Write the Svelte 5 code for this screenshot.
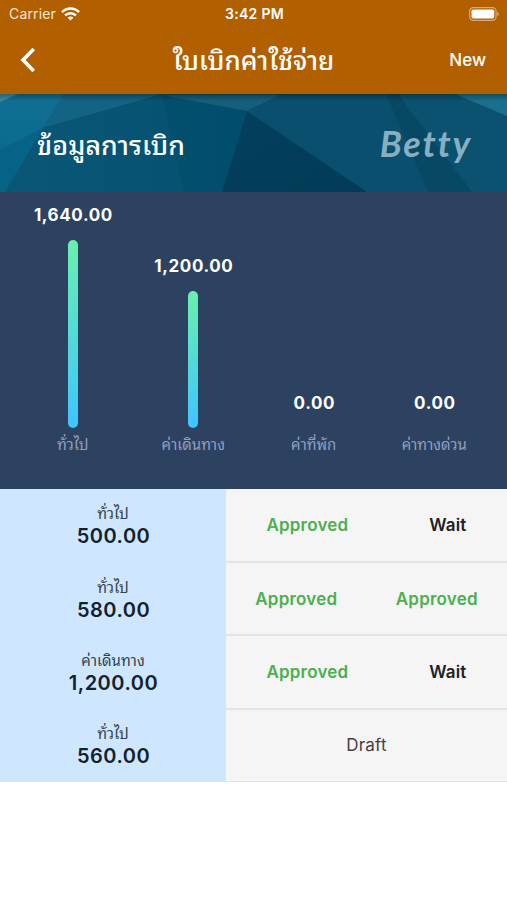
<script lang="ts">
	type Category = { label: string; total: number };
	type Expense = { kind: string; amount: number; status: string[] };

	const categories: Category[] = [
		{ label: "ทั่วไป", total: 1640 },
		{ label: "ค่าเดินทาง", total: 1200 },
		{ label: "ค่าที่พัก", total: 0 },
		{ label: "ค่าทางด่วน", total: 0 },
	];

	const expenses: Expense[] = [
		{ kind: "ทั่วไป", amount: 500, status: ["Approved", "Wait"] },
		{ kind: "ทั่วไป", amount: 580, status: ["Approved", "Approved"] },
		{ kind: "ค่าเดินทาง", amount: 1200, status: ["Approved", "Wait"] },
		{ kind: "ทั่วไป", amount: 560, status: ["Draft"] },
	];

	const BAR_MAX = 188;
	const peak = Math.max(...categories.map((c) => c.total));
	const barHeight = (n: number) => Math.floor((n / peak) * BAR_MAX);
	const fmt = (n: number) => n.toLocaleString("en-US", { minimumFractionDigits: 2 });
</script>

<div class="screen">
	<div class="top">
		<div class="statusbar">
			<span class="carrier">
				Carrier
				<svg width="19" height="14" viewBox="0 0 19 14" fill="none" stroke="#fff" stroke-width="2.5">
					<path d="M1 5.2C5.8.4 13.2.4 18 5.2" />
					<path d="M4.1 8.4c3.1-3 7.7-3 10.8 0" />
					<path d="M9.5 13.6 6.6 10.7c1.7-1.5 4.1-1.5 5.8 0z" fill="#fff" stroke="none" />
				</svg>
			</span>
			<span class="time">3:42 PM</span>
			<svg class="battery" width="31" height="14" viewBox="0 0 31 14">
				<rect x=".7" y=".7" width="26.4" height="12.6" rx="3.6" fill="none" stroke="#d9a878" stroke-width="1.2" />
				<rect x="2.5" y="2.5" width="22.8" height="9" rx="1.8" fill="#fff" />
				<path d="M28.3 4.8c2 .7 2 3.7 0 4.4z" fill="#d9a878" />
			</svg>
		</div>
		<header>
			<button class="back" aria-label="Back">
				<svg width="16" height="26" viewBox="0 0 16 26" fill="none" stroke="#fff" stroke-width="3.6">
					<path d="M13.7 2 3 13l10.7 11" />
				</svg>
			</button>
			<h1>ใบเบิกค่าใช้จ่าย</h1>
			<button class="new">New</button>
		</header>
	</div>

	<section class="banner">
		<svg class="facets" viewBox="0 0 507 98" preserveAspectRatio="none" aria-hidden="true">
			<defs>
				<linearGradient id="mid" x1="0" x2="1">
					<stop offset="0" stop-color="#0a5676" />
					<stop offset="1" stop-color="#035170" />
				</linearGradient>
				<linearGradient id="left" x1="0" y1="0" x2="0" y2="1">
					<stop offset="0" stop-color="#116f92" />
					<stop offset="1" stop-color="#05688f" />
				</linearGradient>
				<linearGradient id="deep" x1="0" y1="0" x2="1" y2="1">
					<stop offset="0" stop-color="#043f5d" />
					<stop offset="1" stop-color="#023b58" />
				</linearGradient>
				<linearGradient id="shade" x1="0" y1="0" x2="0" y2="1">
					<stop offset="0" stop-color="#000" stop-opacity=".3" />
					<stop offset="1" stop-color="#000" stop-opacity="0" />
				</linearGradient>
			</defs>
			<rect width="507" height="98" fill="#0b5270" />
			<path d="M0 0h64L43 34 5 98H0z" fill="url(#left)" />
			<path d="M0 56 43 34 5 98H0z" fill="#066287" />
			<path d="M0 0h18L0 8z" fill="#3b8ca5" />
			<path d="M64 0h98L43 34z" fill="#126384" />
			<path d="M43 34 162 1l85 16-25 81H5z" fill="url(#mid)" />
			<path d="M162 1l85 16-25 81h-38z" fill="#014968" opacity=".35" />
			<path d="M162 1h119l-34 16z" fill="#155e7c" />
			<path d="M247 17 281 0h105l42 98h-61z" fill="#0b4f6e" />
			<path d="M247 17 367 98H222z" fill="url(#deep)" />
			<path d="M386 0h12l74 98h-44z" fill="#074865" />
			<path d="M455 0h52v22z" fill="#196f8d" />
			<rect width="507" height="7" fill="url(#shade)" />
		</svg>
		<h2>ข้อมูลการเบิก</h2>
		<span class="brand">Betty</span>
	</section>

	<section class="chart">
		{#each categories as c}
			<div class="col">
				<span class="total">{fmt(c.total)}</span>
				<div class="bar" style="height: {barHeight(c.total)}px"></div>
				<span class="label">{c.label}</span>
			</div>
		{/each}
	</section>

	<ul class="list">
		{#each expenses as e}
			<li>
				<div class="expense">
					<span class="kind">{e.kind}</span>
					<span class="amount">{fmt(e.amount)}</span>
				</div>
				<div class="states">
					{#each e.status as s}
						<span class="state {s.toLowerCase()}">{s}</span>
					{/each}
				</div>
			</li>
		{/each}
	</ul>
</div>

<style>
	:global(body) {
		margin: 0;
		background: #fff;
	}
	.screen {
		--thai: Thonburi, "Noto Sans Thai Looped", "Noto Looped Thai", Loma, Garuda, Waree, "Noto Sans Thai", Inter, sans-serif;
		min-height: 900px;
		font-family: Inter, "Noto Sans", sans-serif;
		color: #212121;
	}
	.top {
		height: 94px;
		background: #b25f00;
		color: #fff;
	}
	.statusbar {
		display: grid;
		grid-template-columns: 1fr auto 1fr;
		align-items: center;
		height: 27px;
		padding: 0 7px 0 9px;
		font-size: 14px;
	}
	.carrier {
		display: flex;
		align-items: center;
		gap: 5px;
		letter-spacing: 0.15px;
		color: #f7e6d5;
	}
	.time {
		font-size: 14px;
		font-weight: 600;
		letter-spacing: 0.3px;
	}
	.battery {
		justify-self: end;
	}
	header {
		display: grid;
		grid-template-columns: 1fr auto 1fr;
		align-items: center;
		height: 66px;
		padding: 0 21px 0 20px;
	}
	button {
		padding: 0;
		border: none;
		background: none;
		color: inherit;
		font-family: inherit;
	}
	.back {
		justify-self: start;
		height: 26px;
	}
	.new {
		justify-self: end;
		font-size: 17px;
		font-weight: 500;
	}
	h1,
	h2 {
		margin: 0;
		font-family: var(--thai);
		font-size: 26px;
		line-height: 32px;
		font-weight: 500;
		white-space: nowrap;
	}
	h1 {
		padding: 0 0 5px 1px;
	}
	h2 {
		padding-bottom: 1px;
		font-size: 26.7px;
		letter-spacing: 0.1px;
	}

	.banner {
		position: relative;
		display: flex;
		align-items: center;
		justify-content: space-between;
		height: 98px;
		padding: 0 35px 0 37px;
		box-sizing: border-box;
		color: #fff;
	}
	.facets {
		position: absolute;
		inset: 0;
		width: 100%;
		height: 100%;
	}
	.banner h2,
	.brand {
		position: relative;
	}
	.brand {
		font-family: Lato, sans-serif;
		font-size: 36px;
		font-style: italic;
		font-weight: 700;
		letter-spacing: 1.8px;
		color: #87afc2;
	}

	.chart {
		display: flex;
		height: 297px;
		padding: 0 12.5px 33px;
		box-sizing: border-box;
		background: #2c4260;
	}
	.col {
		flex: 1;
		display: flex;
		flex-direction: column;
		align-items: center;
		justify-content: flex-end;
	}
	.total {
		margin-bottom: 15px;
		padding-left: 1.2px;
		font-size: 17px;
		line-height: 20px;
		font-weight: 700;
		letter-spacing: 0.6px;
		color: #fff;
	}
	.bar {
		width: 10px;
		border-radius: 5px;
		background: linear-gradient(#69f0ae, #40c4ff);
	}
	.label {
		height: 28px;
		line-height: 30px;
		font-family: var(--thai);
		font-size: 15px;
		color: #8e9fc0;
		white-space: nowrap;
	}

	.list {
		margin: 0;
		padding: 0;
		list-style: none;
	}
	li {
		display: flex;
		height: 73.33px;
	}
	li:first-child {
		height: 74px;
	}
	.expense {
		display: flex;
		flex-direction: column;
		align-items: center;
		justify-content: center;
		width: 226px;
		background: #cee7ff;
	}
	.kind {
		height: 20px;
		line-height: 16px;
		font-family: var(--thai);
		font-size: 15px;
		color: #35434f;
	}
	.amount {
		padding-left: 1px;
		line-height: 24px;
		font-size: 20px;
		font-weight: 600;
		letter-spacing: 0.5px;
		color: #14212c;
	}
	.states {
		flex: 1;
		display: flex;
		align-items: center;
		justify-content: space-around;
		box-sizing: border-box;
		border-bottom: 2px solid #e4e4e4;
		background: #f5f5f5;
	}
	li:last-child {
		height: 72.3px;
	}
	li:last-child .states {
		border-bottom-width: 1px;
	}
	.state {
		font-size: 17px;
		font-weight: 600;
		letter-spacing: 0.2px;
	}
	.approved {
		color: #4caf50;
	}
	.draft {
		font-weight: 400;
		color: #424242;
	}
</style>
